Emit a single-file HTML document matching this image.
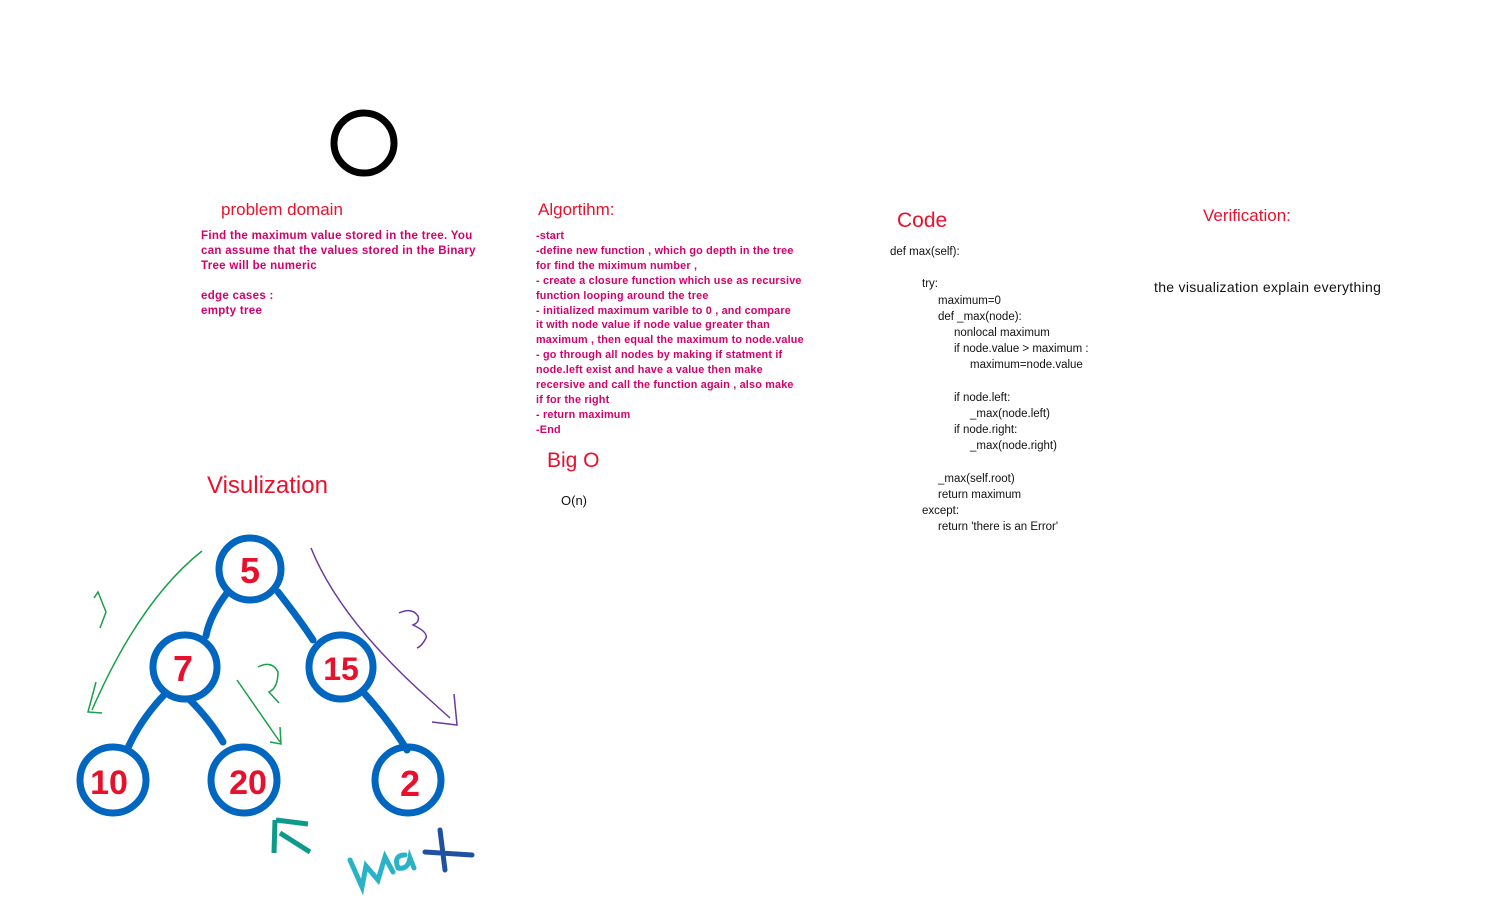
<!DOCTYPE html>
<html><head><meta charset="utf-8"><style>
body{margin:0;width:1487px;height:916px;background:#fff;position:relative;overflow:hidden;font-family:"Liberation Sans",sans-serif}
.t{position:absolute;white-space:nowrap}
.h{color:#e8112d;font-size:17px}
.m{color:#d4006a;font-size:10.8px;line-height:14.9px;font-weight:bold}
.c{color:#111;font-size:11.5px;line-height:16.2px}
.c div{height:16.2px}
.i1{padding-left:32px}.i2{padding-left:48px}.i3{padding-left:64px}.i4{padding-left:80px}
</style></head><body>
<svg width="1487" height="916" style="position:absolute;left:0;top:0">
<circle cx="364" cy="143" r="30" fill="none" stroke="#000" stroke-width="7"/>
<g stroke="#0066bf" stroke-width="7" fill="none" stroke-linecap="round">
<circle cx="250" cy="569" r="31"/>
<circle cx="185" cy="667" r="32"/>
<circle cx="341" cy="667" r="32"/>
<circle cx="113" cy="780" r="33"/>
<circle cx="244" cy="780" r="33"/>
<circle cx="408" cy="780" r="33"/>
<path d="M227 593 Q210 615 206 636"/>
<path d="M278 592 Q300 620 313 640"/>
<path d="M165 694 Q140 720 127 750"/>
<path d="M190 700 Q210 720 223 742"/>
<path d="M365 694 Q390 722 407 750"/>
</g>
<g stroke="#1a9e4a" stroke-width="1.5" fill="none">
<path d="M202 551 Q140 600 92 710 M96 682 L88 712 L102 713"/>
<path d="M237 680 L280 742 M270 742 L281 744 L280 727"/>
<path d="M94 598 L98 592 L106 612 L100 628"/>
<path d="M258 667 Q272 660 278 672 Q278 688 269 692 L279 703"/>
</g>
<g stroke="#6a3aa0" stroke-width="1.5" fill="none">
<path d="M311 548 Q340 620 430 700 L450 718 M454 694 L457 725 L432 722"/>
<path d="M399 613 Q412 607 418 616 Q420 622 413 625 Q428 632 426 638 Q422 646 417 648"/>
</g>
<g stroke="#0e9a8a" stroke-width="5" fill="none">
<path d="M275 820 L274 853 M276 820 L308 824 M280 833 L310 852"/>
</g>
<g stroke="#2ab3c7" stroke-width="5" fill="none" stroke-linecap="round">
<path d="M350 860 L362 887 L366 866 L378 880 L385 857 L393 872"/>
<path d="M405 855 Q393 855 398 868 Q408 870 410 858 L414 868"/>
</g>
<g stroke="#2050a0" stroke-width="5" fill="none" stroke-linecap="round">
<path d="M440 830 L445 870 M425 852 L472 855"/>
</g>
<g font-family="Liberation Sans" font-weight="bold" fill="#e8112d" text-anchor="middle">
<text x="250" y="583" font-size="36">5</text>
<text x="183" y="681" font-size="36">7</text>
<text x="341" y="680" font-size="32">15</text>
<text x="109" y="794" font-size="34">10</text>
<text x="248" y="794" font-size="34">20</text>
<text x="410" y="796" font-size="36">2</text>
</g>
</svg>
<div class="t h" style="left:221px;top:200px">problem domain</div>
<div class="t m" style="left:201px;top:229px;font-size:11.5px;letter-spacing:0.3px">Find the maximum value stored in the tree. You<br>can assume that the values stored in the Binary<br>Tree will be numeric<br><br>edge cases :<br>empty tree</div>
<div class="t h" style="left:538px;top:200px">Algortihm:</div>
<div class="t m" style="left:536px;top:229px;letter-spacing:0.2px">-start<br>-define new function , which go depth in the tree<br>for find the miximum number ,<br>- create a closure function which use as recursive<br>function looping around the tree<br>- initialized maximum varible to 0 , and compare<br>it with node value if node value greater than<br>maximum , then equal the maximum to node.value<br>- go through all nodes by making if statment if<br>node.left exist and have a value then make<br>recersive and call the function again , also make<br>if for the right<br>- return maximum<br>-End</div>
<div class="t h" style="left:897px;top:209px;font-size:21px">Code</div>
<div class="t c" style="left:890px;top:244px">
<div>def max(self):</div><div></div>
<div class="i1">try:</div>
<div class="i2">maximum=0</div>
<div class="i2">def _max(node):</div>
<div class="i3">nonlocal maximum</div>
<div class="i3">if node.value &gt; maximum :</div>
<div class="i4">maximum=node.value</div><div></div>
<div class="i3">if node.left:</div>
<div class="i4">_max(node.left)</div>
<div class="i3">if node.right:</div>
<div class="i4">_max(node.right)</div><div></div>
<div class="i2">_max(self.root)</div>
<div class="i2">return maximum</div>
<div class="i1">except:</div>
<div class="i2">return 'there is an Error'</div>
</div>
<div class="t h" style="left:1203px;top:206px">Verification:</div>
<div class="t" style="left:1154px;top:279px;font-size:14px;color:#111;letter-spacing:0.3px">the visualization explain everything</div>
<div class="t h" style="left:547px;top:449px;font-size:21px">Big O</div>
<div class="t" style="left:561px;top:493px;font-size:13px;color:#111">O(n)</div>
<div class="t h" style="left:207px;top:472px;font-size:24px">Visulization</div>
</body></html>
